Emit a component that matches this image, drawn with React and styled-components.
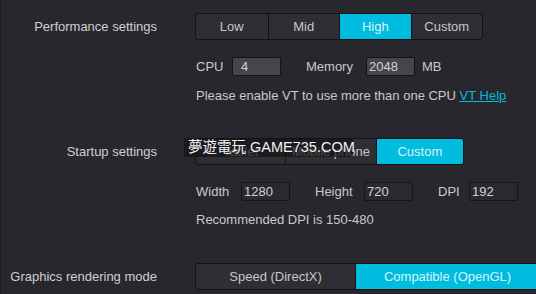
import React from "react";
import styled, { createGlobalStyle } from "styled-components";

const GlobalStyle = createGlobalStyle`
  html, body {
    margin: 0;
    padding: 0;
    background: #28272d;
  }
  body {
    font-family: "Liberation Sans", "Noto Sans CJK SC", sans-serif;
    font-size: 13px;
    color: #c9c9cc;
  }
`;

const Page = styled.div`
  width: 536px;
  height: 294px;
  box-sizing: border-box;
  padding-top: 13px;
  border-left: 1px solid #1c1b20;
  position: relative;
  overflow: hidden;
`;

const Row = styled.div`
  display: grid;
  grid-template-columns: 156px auto;
  column-gap: 38px;
  align-items: center;
  margin-top: ${(p) => p.top || 0}px;
`;

const Label = styled.div`
  text-align: right;
  white-space: nowrap;
  color: #cfcfd2;
`;

const Segmented = styled.div`
  display: flex;
  width: ${(p) => p.w}px;
  height: 27px;
  box-sizing: border-box;
  border: 1px solid #131216;
  border-radius: 3px;
  overflow: hidden;
  background: #2f2e34;
`;

const Segment = styled.div`
  width: ${(p) => p.w}px;
  display: flex;
  align-items: center;
  justify-content: center;
  white-space: nowrap;
  box-sizing: border-box;
  border-left: ${(p) => (p.first ? "none" : "1px solid #131216")};
  background: ${(p) => (p.active ? "#00bcdf" : "transparent")};
  color: ${(p) => (p.active ? "#d9f3f9" : "#c6c6ca")};
`;

const Sub = styled.div`
  margin-left: 195px;
  margin-top: ${(p) => p.top}px;
  display: flex;
  align-items: center;
  height: 19px;
  white-space: nowrap;
`;

const FieldLabel = styled.span`
  width: ${(p) => p.w}px;
  flex: none;
`;

const Field = styled.div`
  width: 49px;
  height: 19px;
  box-sizing: border-box;
  border: 1px solid #151418;
  border-radius: 2px;
  background: ${(p) => (p.light ? "#46454c" : "#2a292f")};
  padding-left: ${(p) => p.pad || 2}px;
  margin-right: ${(p) => p.mr || 0}px;
  display: flex;
  align-items: center;
  color: #d2d2d5;
  line-height: 1;
  flex: none;
`;

const Note = styled.div`
  margin-left: 195px;
  margin-top: ${(p) => p.top}px;
  line-height: 20px;
  white-space: nowrap;
`;

const Link = styled.a`
  color: #00bcdf;
  text-decoration: underline;
`;

const Watermark = styled.div`
  position: absolute;
  left: 183px;
  top: 138px;
  height: 19px;
  width: 169px;
  box-sizing: border-box;
  padding-left: 4px;
  background: rgba(18, 18, 20, 0.7);
  color: #f2f2f2;
  font-size: 14.5px;
  line-height: 19px;
  white-space: nowrap;
`;

export default function App() {
  return (
    <Page>
      <GlobalStyle />
      <Row>
        <Label>Performance settings</Label>
        <Segmented w={288}>
          <Segment w={72} first>Low</Segment>
          <Segment w={72}>Mid</Segment>
          <Segment w={72} active>High</Segment>
          <Segment w={72}>Custom</Segment>
        </Segmented>
      </Row>
      <Sub top={17}>
        <FieldLabel w={36}>CPU</FieldLabel>
        <Field light pad={8} mr={25}>4</Field>
        <FieldLabel w={60}>Memory</FieldLabel>
        <Field light mr={7}>2048</Field>
        <span>MB</span>
      </Sub>
      <Note top={10}>
        Please enable VT to use more than one CPU <Link>VT Help</Link>
      </Note>

      <Row top={32}>
        <Label>Startup settings</Label>
        <Segmented w={269}>
          <Segment w={90} first>Tablet</Segment>
          <Segment w={91}>Mobile phone</Segment>
          <Segment w={88} active>Custom</Segment>
        </Segmented>
      </Row>
      <Sub top={17}>
        <FieldLabel w={45}>Width</FieldLabel>
        <Field mr={25}>1280</Field>
        <FieldLabel w={49}>Height</FieldLabel>
        <Field mr={25}>720</Field>
        <FieldLabel w={31}>DPI</FieldLabel>
        <Field>192</Field>
      </Sub>
      <Note top={9}>Recommended DPI is 150-480</Note>

      <Row top={33}>
        <Label>Graphics rendering mode</Label>
        <Segmented w={345}>
          <Segment w={160} first>Speed (DirectX)</Segment>
          <Segment w={185} active>Compatible (OpenGL)</Segment>
        </Segmented>
      </Row>

      <Watermark>夢遊電玩 GAME735.COM</Watermark>
    </Page>
  );
}
